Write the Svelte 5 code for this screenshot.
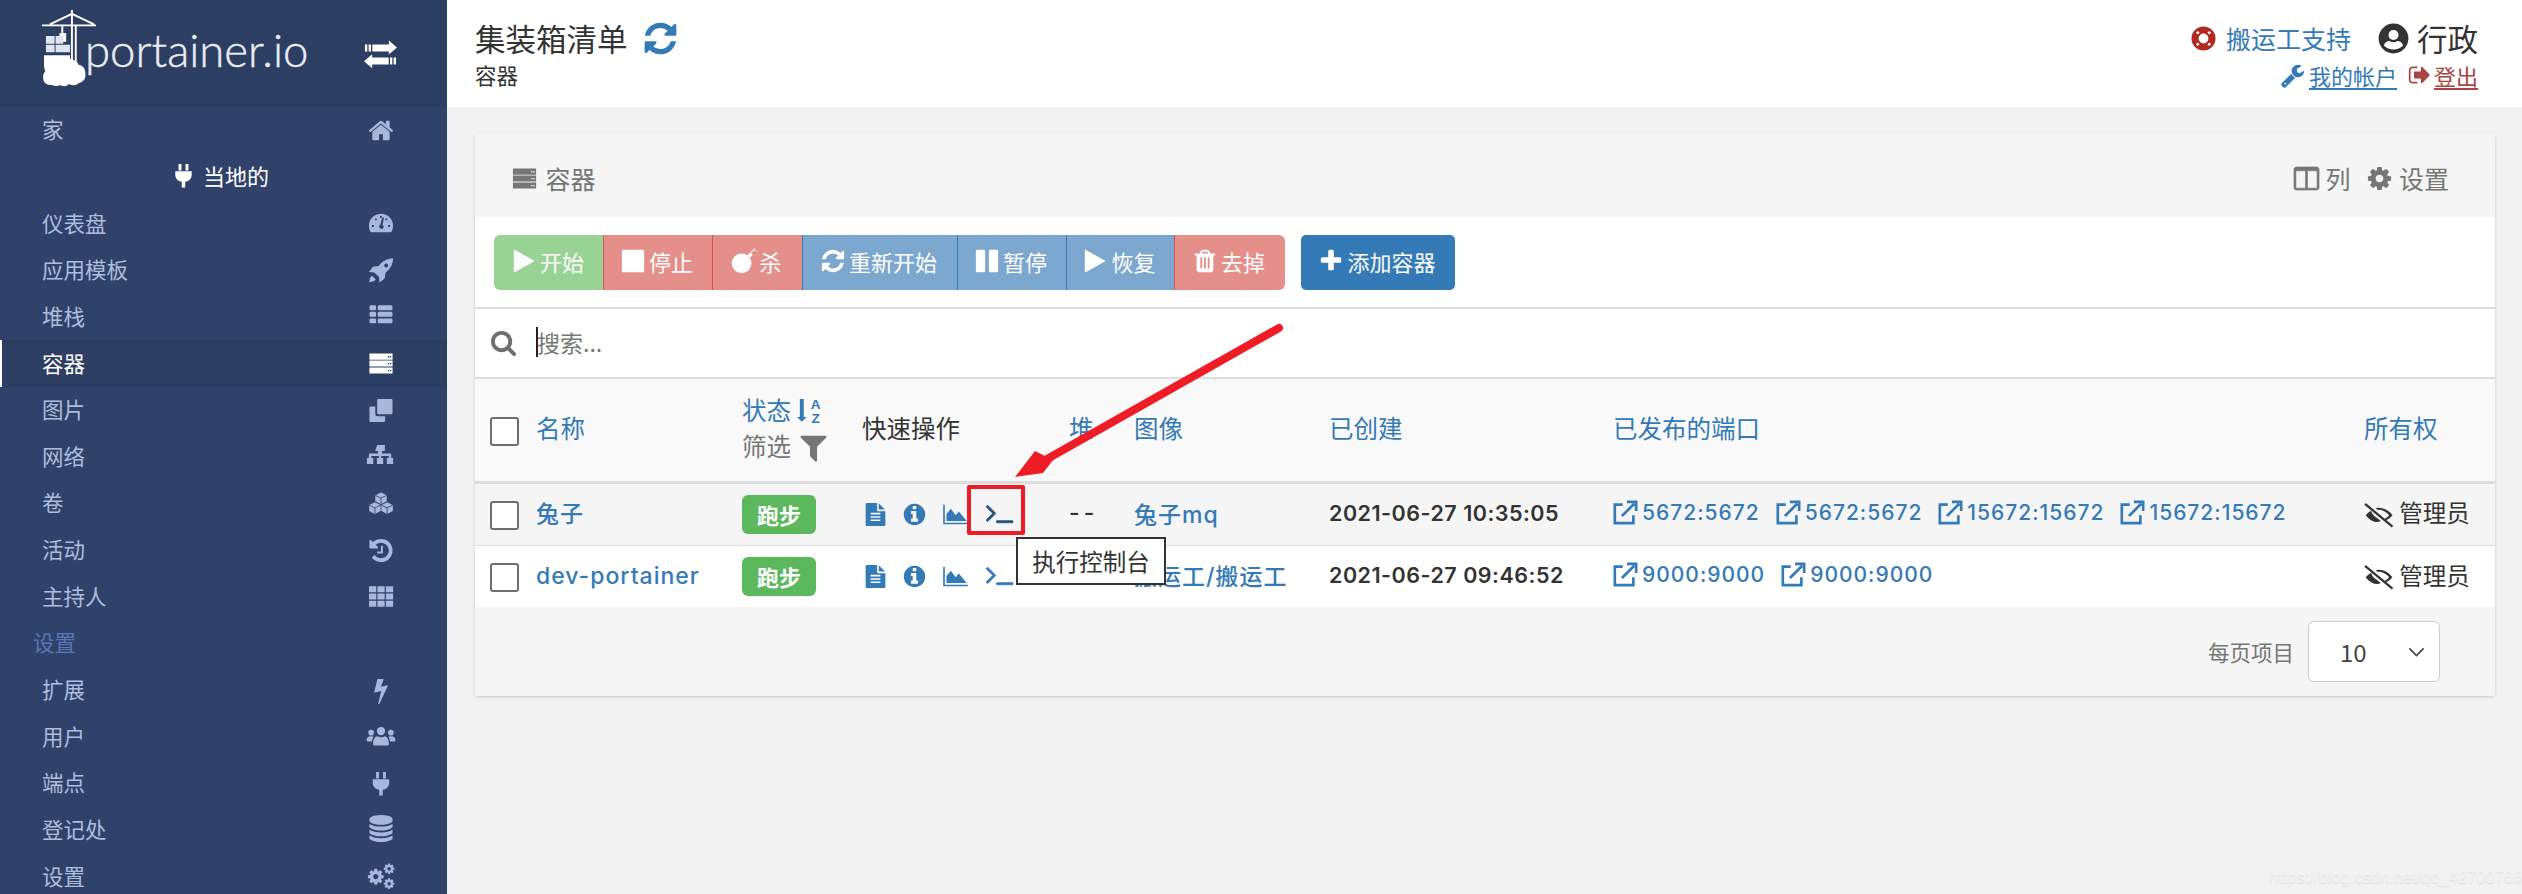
<script>
  const p = (d, extra = '') => `<path d="${d}" ${extra}/>`;
  const cogD = 'M1152 896q0-106-75-181t-181-75-181 75-75 181 75 181 181 75 181-75 75-181zm512-109v222q0 12-8 23t-20 13l-185 28q-19 54-39 91 35 50 107 138 10 12 10 25t-9 23q-27 37-99 108t-94 71q-12 0-26-9l-138-108q-44 23-91 38-16 136-29 186-7 28-36 28h-222q-14 0-24.500-8.500t-11.500-21.500l-28-184q-49-16-90-37l-141 107q-10 9-25 9-14 0-25-11-126-114-165-168-7-10-7-23 0-12 8-23 15-21 51-66.500t54-70.500q-27-50-41-99l-183-27q-13-2-21-12.500t-8-23.500v-222q0-12 8-23t19-13l186-28q14-46 39-92-40-57-107-138-10-12-10-24 0-10 9-23 26-36 98.500-107.500t94.500-71.500q13 0 26 10l138 107q44-23 91-38 16-136 29-186 7-28 36-28h222q14 0 24.500 8.500t11.500 21.500l28 184q49 16 90 37l142-107q9-9 24-9 13 0 25 10 129 119 165 170 7 8 7 22 0 12-8 23-15 21-51 66.500t-54 70.500q26 50 41 98l183 28q13 2 21 12.500t8 23.500z';
  const hex = (x, y) => `<path d="M${x} ${y - 400}l380 190v400l-380 190-380-190v-400z"/><path d="M${x - 380} ${y - 210}l380 190 380-190M${x} ${y - 20}v400" fill="none" stroke="#30426a" stroke-width="55"/>`;

  const icons = {
    home: p('M1472 992v480q0 26-19 45t-45 19h-384v-384h-256v384h-384q-26 0-45-19t-19-45v-480q0-1 .5-3t.5-3l575-474 575 474q1 2 1 6zm223-69l-62 74q-8 9-21 11h-3q-13 0-21-7l-692-577-692 577q-12 8-24 7-13-2-21-11l-62-74q-8-10-7-23.500t11-21.500l719-599q32-26 76-26t76 26l244 204v-195q0-14 9-23t23-9h192q14 0 23 9t9 23v408l219 182q10 8 11 21.500t-7 23.500z'),
    refresh: p('M1639 1056q0 5-1 7-64 268-268 434.500t-478 166.500q-146 0-282.500-55t-243.500-157l-129 129q-19 19-45 19t-45-19-19-45v-448q0-26 19-45t45-19h448q26 0 45 19t19 45-19 45l-137 137q71 66 161 102t187 36q134 0 250-65t186-179q11-17 53-117 8-23 30-23h192q13 0 22.500 9.500t9.500 22.500zm25-800v448q0 26-19 45t-45 19h-448q-26 0-45-19t-19-45 19-45l138-138q-148-137-349-137-134 0-250 65t-186 179q-11 17-53 117-8 23-30 23h-199q-13 0-22.500-9.500t-9.500-22.500v-7q65-268 270-434.500t480-166.500q146 0 284 55.500t245 156.500l130-129q19-19 45-19t45 19 19 45z'),
    play: p('M1576 927l-1328 738q-23 13-39.500 3t-16.500-36v-1472q0-26 16.500-36t39.500 3l1328 738q23 13 23 31t-23 31z'),
    stop: p('M1664 192v1408q0 26-19 45t-45 19h-1408q-26 0-45-19t-19-45v-1408q0-26 19-45t45-19h1408q26 0 45 19t19 45z'),
    pause: p('M1664 192v1408q0 26-19 45t-45 19h-512q-26 0-45-19t-19-45v-1408q0-26 19-45t45-19h512q26 0 45 19t19 45zm-896 0v1408q0 26-19 45t-45 19h-512q-26 0-45-19t-19-45v-1408q0-26 19-45t45-19h512q26 0 45 19t19 45z'),
    plus: p('M1600 736v192q0 40-28 68t-68 28h-416v416q0 40-28 68t-68 28h-192q-40 0-68-28t-28-68v-416h-416q-40 0-68-28t-28-68v-192q0-40 28-68t68-28h416v-416q0-40 28-68t68-28h192q40 0 68 28t28 68v416h416q40 0 68 28t28 68z'),
    search: p('M1216 832q0-185-131.500-316.500t-316.500-131.500-316.500 131.500-131.500 316.500 131.500 316.500 316.500 131.500 316.500-131.500 131.500-316.500zm512 832q0 52-38 90t-90 38q-54 0-90-38l-343-342q-179 124-399 124-143 0-273.500-55.500t-225-150-150-225-55.500-273.500 55.500-273.500 150-225 225-150 273.500-55.500 273.500 55.500 225 150 150 225 55.500 273.500q0 220-124 399l343 343q37 37 37 90z'),
    trash: p('M704 1376v-704q0-14-9-23t-23-9h-64q-14 0-23 9t-9 23v704q0 14 9 23t23 9h64q14 0 23-9t9-23zm256 0v-704q0-14-9-23t-23-9h-64q-14 0-23 9t-9 23v704q0 14 9 23t23 9h64q14 0 23-9t9-23zm256 0v-704q0-14-9-23t-23-9h-64q-14 0-23 9t-9 23v704q0 14 9 23t23 9h64q14 0 23-9t9-23zm-544-992h448l-48-117q-7-9-17-11h-317q-10 2-17 11zm928 32v64q0 14-9 23t-23 9h-96v948q0 83-47 143.500t-113 60.500h-832q-66 0-113-58.500t-47-141.500v-952h-96q-14 0-23-9t-9-23v-64q0-14 9-23t23-9h309l70-167q15-37 54-63t79-26h320q40 0 79 26t54 63l70 167h309q14 0 23 9t9 23z'),
    bomb: `<circle cx="800" cy="1060" r="680"/><path d="M1200 500l200-200 170 170-200 200z"/><path d="M1480 300q40-130 170-150" fill="none" stroke="currentColor" stroke-width="80"/><path d="M1700 30v110M1760 200h110" fill="none" stroke="currentColor" stroke-width="60"/>`,
    thlist: p('M512 1248v192q0 40-28 68t-68 28h-320q-40 0-68-28t-28-68v-192q0-40 28-68t68-28h320q40 0 68 28t28 68zm0-512v192q0 40-28 68t-68 28h-320q-40 0-68-28t-28-68v-192q0-40 28-68t68-28h320q40 0 68 28t28 68zm1280 512v192q0 40-28 68t-68 28h-960q-40 0-68-28t-28-68v-192q0-40 28-68t68-28h960q40 0 68 28t28 68zm-1280-1024v192q0 40-28 68t-68 28h-320q-40 0-68-28t-28-68v-192q0-40 28-68t68-28h320q40 0 68 28t28 68zm1280 512v192q0 40-28 68t-68 28h-960q-40 0-68-28t-28-68v-192q0-40 28-68t68-28h960q40 0 68 28t28 68zm0-512v192q0 40-28 68t-68 28h-960q-40 0-68-28t-28-68v-192q0-40 28-68t68-28h960q40 0 68 28t28 68z', 'transform="translate(0 -90) translate(896 896) scale(.85) translate(-896 -896)"'),
    th: p('M100 240h480v410H100zM660 240h480v410H660zM1220 240h480v410h-480zM100 720h480v410H100zM660 720h480v410H660zM1220 720h480v410h-480zM100 1200h480v410H100zM660 1200h480v410H660zM1220 1200h480v410h-480z', 'transform="translate(0 -30)"'),
    server: p('M128 240h1536v400H128zM1340 400v90h90v-90zM1480 400v90h90v-90zM128 700h1536v400H128zM1340 860v90h90v-90zM1480 860v90h90v-90zM128 1160h1536v400H128zM1340 1320v90h90v-90zM1480 1320v90h90v-90z', 'fill-rule="evenodd"'),
    clone: p('M128 720q0-90 90-90h300v520q0 130 130 130h520v290q0 90-90 90h-860q-90 0-90-90zM640 220q0-90 90-90h840q90 0 90 90v840q0 90-90 90h-840q-90 0-90-90z'),
    sitemap: p('M640 130h512v400h-190v170h540q70 0 70 70v230h130v400h-420v-400h130v-140h-500v140h130v400h-420v-400h130v-140h-500v140h130v400h-420v-400h130v-230q0-70 70-70h540v-170h-190z'),
    cubes: hex(896, 560) + hex(490, 1210) + hex(1302, 1210),
    history: p('M1664 896q0 156-61 298t-164 245-245 164-298 61q-172 0-327-72.500t-264-204.500q-7-10-6.500-22.500t8.500-20.500l137-138q10-9 25-9 16 2 23 12 73 95 179 147t225 52q104 0 198.500-40.500t163.500-109.500 109.500-163.500 40.500-198.500-40.500-198.500-109.500-163.500-163.500-109.500-198.500-40.500q-98 0-188 35.500t-160 101.500l137 138q31 30 14 69-17 40-59 40h-448q-26 0-45-19t-19-45v-448q0-42 40-59 39-17 69 14l130 129q107-101 244.500-156.500t284.500-55.500q156 0 298 61t245 164 164 245 61 298zm-640-288v448q0 14-9 23t-23 9h-320q-14 0-23-9t-9-23v-64q0-14 9-23t23-9h224v-352q0-14 9-23t23-9h64q14 0 23 9t9 23z'),
    bolt: p('M1333 566q18 20 7 44l-540 1157q-13 25-42 25-4 0-14-2-17-5-25.500-19t-4.500-30l197-808-406 101q-4 1-12 1-18 0-31-11-18-15-13-39l201-825q4-14 16-23t28-9h328q19 0 32 12.500t13 29.500q0 8-5 18l-171 463 396-98q8-2 12-2 19 0 34 15z'),
    users: `<g transform="translate(896 896) scale(1.1) translate(-896 -920)"><circle cx="896" cy="590" r="250"/><path d="M420 1380c0-300 120-470 260-470 60 40 130 60 216 60s156-20 216-60c140 0 260 170 260 470 0 60-40 90-100 90H520c-60 0-100-30-100-90z"/><circle cx="300" cy="690" r="170"/><circle cx="1492" cy="690" r="170"/><path d="M330 910c50 25 100 25 130 15-60 90-100 190-110 300H110c-50 0-80-30-80-70 0-170 90-260 300-245z"/><path d="M1462 910c-50 25-100 25-130 15 60 90 100 190 110 300h240c50 0 80-30 80-70 0-170-90-260-300-245z"/></g>`,
    plug: p('M570 130h190v430H570zM1030 130h190v430h-190zM350 620h1090v220c0 250-190 440-430 470v380H780v-380c-240-30-430-220-430-470z'),
    database: p('M896 768q237 0 443-43t325-127v170q0 69-103 128t-280 93.500-385 34.500-385-34.500-280-93.500-103-128v-170q119 84 325 127t443 43zm0 768q237 0 443-43t325-127v170q0 69-103 128t-280 93.500-385 34.500-385-34.500-280-93.500-103-128v-170q119 84 325 127t443 43zm0-384q237 0 443-43t325-127v170q0 69-103 128t-280 93.500-385 34.500-385-34.500-280-93.500-103-128v-170q119 84 325 127t443 43zm0-1152q208 0 385 34.500t280 93.500 103 128v128q0 69-103 128t-280 93.500-385 34.500-385-34.500-280-93.500-103-128v-128q0-69 103-128t280-93.500 385-34.500z', 'transform="translate(0 -64)"'),
    cog: p(cogD),
    cogs: `<g transform="translate(-60 300) scale(.68)">${p(cogD)}</g><g transform="translate(1020 -30) scale(.46)">${p(cogD)}</g><g transform="translate(1020 960) scale(.46)">${p(cogD)}</g>`,
    tach: p('M896 256C450 256 96 610 96 1056c0 150 40 280 110 400 12 18 30 28 52 28h1276c22 0 40-10 52-28 70-120 110-250 110-400 0-446-354-800-800-800zM300 1000h120v120H300zM500 560h120v120H500zM830 400h120v120H830zM1190 560h120v120h-120zM1370 1000h120v120h-120zM1090 520l-90 470q90 60 70 150-30 110-170 100-120-20-130-140 0-90 90-130l110-470z', 'fill-rule="evenodd"'),
    rocket: p('M1700 90c-420 20-720 200-960 500l-380 60-260 340 360 40 300 300 40 360 340-260 60-380c300-240 480-540 500-960zM1240 430a130 130 0 1 0 1 0zM300 1240c-90 60-160 170-180 430 260-20 370-90 430-180z', 'fill-rule="evenodd"'),
    exchange: p('M50 356h130v378H50zM250 356h130v378H250zM450 356h900V140l442 378-442 378V734H450zM1740 1060h-130v378h130zM1540 1060h-130v378h130zM1340 1060H442V880L0 1260l442 380v-202h898z'),
    external: `<path d="M700 330H130v1330h1330v-570M640 1150L1520 270M1000 130h660v660" fill="none" stroke="currentColor" stroke-width="190"/>`,
    info: p('M1152 1376v-160q0-14-9-23t-23-9h-96v-512q0-14-9-23t-23-9h-320q-14 0-23 9t-9 23v160q0 14 9 23t23 9h96v320h-96q-14 0-23 9t-9 23v160q0 14 9 23t23 9h448q14 0 23-9t9-23zm-128-896v-160q0-14-9-23t-23-9h-192q-14 0-23 9t-9 23v160q0 14 9 23t23 9h192q14 0 23-9t9-23zm640 416q0 209-103 385.500t-279.500 279.500-385.500 103-385.500-103-279.500-279.500-103-385.500 103-385.500 279.500-279.500 385.500-103 385.500 103 279.500 279.500 103 385.500z'),
    file: p('M1596 476q14 14 28 36h-472v-472q22 14 36 28zm-476 164h544v1056q0 40-28 68t-68 28h-1344q-40 0-68-28t-28-68v-1600q0-40 28-68t68-28h800v544q0 40 28 68t68 28zm160 736v-64q0-14-9-23t-23-9h-704q-14 0-23 9t-9 23v64q0 14 9 23t23 9h704q14 0 23-9t9-23zm0-256v-64q0-14-9-23t-23-9h-704q-14 0-23 9t-9 23v64q0 14 9 23t23 9h704q14 0 23-9t9-23zm0-256v-64q0-14-9-23t-23-9h-704q-14 0-23 9t-9 23v64q0 14 9 23t23 9h704q14 0 23-9t9-23z'),
    area: p('M1920 1536v128H0V128h128v1408zM256 1400V860l340-420 380 520 240-300 620 740z', 'transform="translate(-64 0)"'),
    terminal: p('M649 983l-466 466q-10 10-23 10t-23-10l-50-50q-10-10-10-23t10-23l393-393-393-393q-10-10-10-23t10-23l50-50q10-10 23-10t23 10l466 466q10 10 10 23t-10 23zm1079 457v64q0 14-9 23t-23 9h-960q-14 0-23-9t-9-23v-64q0-14 9-23t23-9h960q14 0 23 9t9 23z', 'stroke="currentColor" stroke-width="50" transform="translate(0 -130)"'),
    eyeslash: `<path d="M60 230L1700 1590" fill="none" stroke="currentColor" stroke-width="135"/><path d="M100 910Q230 730 430 640 470 880 800 1090l200 170q-100 60-200 60-400 0-700-410zM700 480q100-20 196-20 484 20 804 450-140 200-370 300l-100-90q190-80 270-210-240-300-600-330l-80 10z"/>`,
    wrench: p('M448 1472q0-26-19-45t-45-19-45 19-19 45 19 45 45 19 45-19 19-45zm644-420l-682 682q-37 37-90 37-52 0-91-37l-106-108q-38-36-38-90 0-53 38-91l681-681q39 98 114.500 173.500t173.500 114.500zm634-435q0 39-23 106-47 134-164.500 217.500t-258.500 83.500q-185 0-316.500-131.500t-131.500-316.500 131.500-316.500 316.500-131.500q58 0 121.500 16.500t107.500 46.500q16 11 16 28t-16 28l-293 169v224l193 107q5-3 79-48.500t135.500-81 70.500-35.500q15 0 23.500 10t8.500 25z'),
    signout: p('M704 1440q0 4 1 20t.5 26.500-3 23.500-10 19.500-20.500 6.500h-320q-119 0-203.500-84.500t-84.500-203.500v-704q0-119 84.500-203.500t203.500-84.500h320q13 0 22.500 9.500t9.500 22.500q0 4 1 20t.5 26.500-3 23.500-10 19.500-20.500 6.500h-320q-66 0-113 47t-47 113v704q0 66 47 113t113 47h312l11.500 1 11.500 3 8 5.500 7 9 2 13.500zm928-544q0 26-19 45l-544 544q-19 19-45 19t-45-19-19-45v-288h-448q-26 0-45-19t-19-45v-384q0-26 19-45t45-19h448v-288q0-26 19-45t45-19 45 19l544 544q19 19 19 45z'),
    columns: p('M224 1536h608v-1152h-640v1120q0 13 9.500 22.500t22.500 9.500zm1376-32v-1120h-640v1152h608q13 0 22.500-9.500t9.500-22.500zm128-1216v1216q0 66-47 113t-113 47h-1344q-66 0-113-47t-47-113v-1216q0-66 47-113t113-47h1344q66 0 113 47t47 113z', 'stroke="currentColor" stroke-width="40"'),
    filter: p('M1595 295q17 41-14 70l-493 493v742q0 42-39 59-13 5-25 5-27 0-45-19l-256-256q-19-19-19-45v-486l-493-493q-31-29-14-70 17-39 59-39h1280q42 0 59 39z'),
    sort: `<path d="M640 1330l-320 320-320-320h190V140h260v1190z"/><text x="1240" y="820" font-size="900" font-weight="700" text-anchor="middle" font-family="Liberation Sans, sans-serif">A</text><text x="1240" y="1700" font-size="900" font-weight="700" text-anchor="middle" font-family="Liberation Sans, sans-serif">Z</text>`,
    lifering: `<circle cx="896" cy="896" r="860"/><circle cx="896" cy="896" r="350" fill="#fff"/><path d="M420 420l130 130M1372 420l-130 130M420 1372l130-130M1372 1372l-130-130" stroke="#fff" stroke-width="190"/>`,
    user: `<circle cx="896" cy="896" r="860"/><circle cx="896" cy="690" r="290" fill="#fff"/><path d="M340 1300c60-220 240-260 330-260 130 90 320 90 450 0 90 0 270 40 330 260-280 300-830 300-1110 0z" fill="#fff"/>`
  };

  const menu1 = [
    ['仪表盘', 'tach'], ['应用模板', 'rocket'], ['堆栈', 'thlist'], ['容器', 'server', true],
    ['图片', 'clone'], ['网络', 'sitemap'], ['卷', 'cubes'], ['活动', 'history'], ['主持人', 'th']
  ];
  const menu2 = [
    ['扩展', 'bolt'], ['用户', 'users'], ['端点', 'plug'], ['登记处', 'database'], ['设置', 'cogs']
  ];
  const actions = [
    { label: '开始', icon: 'play', kind: 'ok', w: 109 },
    { label: '停止', icon: 'stop', kind: 'bad', w: 109 },
    { label: '杀', icon: 'bomb', kind: 'bad', w: 90 },
    { label: '重新开始', icon: 'refresh', kind: 'pri', w: 155 },
    { label: '暂停', icon: 'pause', kind: 'pri', w: 109 },
    { label: '恢复', icon: 'play', kind: 'pri', w: 108 },
    { label: '去掉', icon: 'trash', kind: 'bad', w: 111 }
  ];
  const rows = [
    { name: '兔子', image: '兔子mq', created: '2021-06-27 10:35:05', hover: true,
      ports: ['5672:5672', '5672:5672', '15672:15672', '15672:15672'] },
    { name: 'dev-portainer', image: '搬运工/搬运工', created: '2021-06-27 09:46:52', hover: false,
      ports: ['9000:9000', '9000:9000'] }
  ];
</script>

{#snippet ic(name, cls = '')}
  <svg class="ic {cls}" viewBox="0 0 1792 1792" fill="currentColor" aria-hidden="true">{@html icons[name]}</svg>
{/snippet}

<div class="page">
  <aside class="sidebar">
    <div class="brand">
      <svg class="crane" viewBox="0 0 58 80" aria-hidden="true">
        <g fill="none" stroke="#fff" stroke-width="2">
          <path d="M0 16h56M31 0v60M35 16v46M8 15l23-11 23 11" />
          <path d="M21 16v8" />
        </g>
        <rect x="18" y="24" width="7" height="9" fill="#fff" />
        <path d="M4 27h9v8H4zM14 27h8v8h-8zM4 36h9v8H4zM14 36h8v8h-8zM22 36h7v8h-7z" fill="#dfe4ee" />
        <path d="M2 47h27v12l-8 9H9q-7-3-7-10z" fill="#fff" />
        <path d="M10 78q-9 0-9-8 0-8 8-9 2-8 10-7 4-5 10-3 7 1 9 6 7 1 7 9 1 8-7 10-5 4-10 1-4 4-9 1-4 2-9 0z" fill="#fff" />
      </svg>
      <span class="brand-name">portainer.io</span>
      <span class="swap">{@render ic('exchange')}</span>
    </div>
    <nav>
      <div class="item">家 {@render ic('home', 'side')}</div>
      <div class="endpoint">{@render ic('plug', 'small')} 当地的</div>
      {#each menu1 as [label, icon, active]}
        <div class="item" class:active>{label} {@render ic(icon, 'side')}</div>
      {/each}
      <div class="section">设置</div>
      {#each menu2 as [label, icon]}
        <div class="item">{label} {@render ic(icon, 'side')}</div>
      {/each}
    </nav>
  </aside>

  <main>
    <header class="topbar">
      <div class="crumb">
        <div class="title">集装箱清单 <span class="reload">{@render ic('refresh')}</span></div>
        <div class="sub">容器</div>
      </div>
      <div class="account">
        <div class="acc-top">
          <span class="ring">{@render ic('lifering')}</span>
          <a class="support">搬运工支持</a>
          <span class="avatar">{@render ic('user')}</span>
          <span class="who">行政</span>
        </div>
        <div class="acc-links">
          <span class="wrench">{@render ic('wrench')}</span><a class="my"> 我的帐户 </a>
          <span class="out">{@render ic('signout')}</span><a class="logout"> 登出</a>
        </div>
      </div>
    </header>

    <section class="card">
      <div class="card-head">
        <div class="card-title">{@render ic('server')} 容器</div>
        <div class="card-tools">
          <span>{@render ic('columns')} 列</span>
          <span>{@render ic('cog')} 设置</span>
        </div>
      </div>

      <div class="actions">
        <div class="group">
          {#each actions as a}
            <button class={a.kind} style="width: {a.w}px">{@render ic(a.icon)} {a.label}</button>
          {/each}
        </div>
        <button class="add">{@render ic('plus')} 添加容器</button>
      </div>

      <div class="search">
        {@render ic('search')}
        <span class="caret"></span>
        <span class="placeholder">搜索...</span>
      </div>

      <table>
        <colgroup>
          <col style="width: 259px" /><col style="width: 120px" /><col style="width: 207px" />
          <col style="width: 65px" /><col style="width: 195px" /><col style="width: 284px" />
          <col style="width: 751px" /><col />
        </colgroup>
        <thead>
          <tr>
            <th><span class="check"></span><a>名称</a></th>
            <th class="status-th">
              <div><a>状态</a> <a class="sort">{@render ic('sort')}</a></div>
              <div class="filter">筛选 {@render ic('filter')}</div>
            </th>
            <th class="plain">快速操作</th>
            <th><a>堆</a></th>
            <th><a>图像</a></th>
            <th><a>已创建</a></th>
            <th><a>已发布的端口</a></th>
            <th><a>所有权</a></th>
          </tr>
        </thead>
        <tbody>
          {#each rows as r}
            <tr class:hover={r.hover}>
              <td class="txt"><span class="check"></span><a class="latin">{r.name}</a></td>
              <td><span class="badge">跑步</span></td>
              <td>
                <div class="quick">
                  <a>{@render ic('file', 'q-file')}</a>
                  <a>{@render ic('info', 'q-info')}</a>
                  <a>{@render ic('area', 'q-area')}</a>
                  <a class="term" class:dark={r.hover}>{@render ic('terminal', 'q-term')}</a>
                </div>
              </td>
              <td class="txt latin dashes">--</td>
              <td class="txt"><a class="latin">{r.image}</a></td>
              <td class="txt latin created">{r.created}</td>
              <td class="txt">
                <div class="ports">
                  {#each r.ports as port}
                    <a class="latin port">{@render ic('external')} {port}</a>
                  {/each}
                </div>
              </td>
              <td class="txt owner">{@render ic('eyeslash')} 管理员</td>
            </tr>
          {/each}
        </tbody>
      </table>

      <div class="card-foot">
        <span class="per">每页项目</span>
        <div class="select">
          <span>10</span>
          <svg viewBox="0 0 16 10" width="19" height="12" fill="none" stroke="#444" stroke-width="1.4"><path d="M2 2l6 6 6-6" /></svg>
        </div>
      </div>
    </section>
  </main>

  <!-- annotations drawn on top of the screenshot -->
  <div class="tooltip">执行控制台</div>
  <div class="redbox"></div>
  <svg class="arrow" viewBox="0 0 2522 894" aria-hidden="true">
    <path d="M1279 328L1040 463" stroke="#ee1c25" stroke-width="8" stroke-linecap="round" fill="none" />
    <path d="M1015 477L1035 451 1053 460 1043 473z" fill="#ee1c25" />
  </svg>
  <div class="watermark">https://blog.csdn.net/qq_42700766</div>
</div>

<style>
  :global(body) {
    margin: 0;
    background: #f2f2f2;
  }

  .page {
    position: relative;
    display: flex;
    width: 2522px;
    height: 894px;
    overflow: hidden;
    font-family: "Noto Sans CJK SC", "Liberation Sans", sans-serif;
    color: #333;
  }

  a {
    color: #337ab7;
  }

  .ic {
    width: 1em;
    height: 1em;
    overflow: visible;
    vertical-align: -0.12em;
    flex: none;
  }

  .sidebar {
    width: 447px;
    flex: none;
    background: #30426a;
    color: #b0bcdc;
    font-size: 21.5px;
  }

  .brand {
    height: 107px;
    box-sizing: border-box;
    background: #2d3e63;
    display: flex;
    align-items: flex-start;
    padding: 10px 50px 0 42px;
    color: #fff;
  }

  .crane {
    width: 56px;
    height: 77px;
    flex: none;
  }

  .brand-name {
    font-family: Lato, "Open Sans", sans-serif;
    font-weight: 300;
    font-size: 45.5px;
    line-height: 50px;
    margin: 15px 0 0 -13px;
    color: #e9edf4;
    -webkit-text-stroke: 0.4px #e9edf4;
  }

  .swap {
    margin: 27px 0 0 auto;
    font-size: 33px;
    line-height: 1;
  }

  .item {
    height: 46.65px;
    display: flex;
    align-items: center;
    justify-content: space-between;
    padding: 0 52px 3px 42px;
    box-sizing: border-box;
  }

  .item .side {
    font-size: 27px;
    color: #a9b7da;
    width: 28px;
    height: 27px;
    margin-top: 3px;
  }

  .item.active {
    background: #2d3e63;
    color: #fff;
    border-left: 2px solid #fff;
    padding-left: 40px;
  }

  .item.active .side {
    color: #fff;
  }

  .endpoint {
    height: 46.65px;
    display: flex;
    align-items: center;
    justify-content: center;
    gap: 6px;
    color: #fff;
    padding: 0 8px 3px 0;
    box-sizing: border-box;
    font-size: 22px;
  }

  .endpoint .small {
    font-size: 27px;
  }

  .section {
    height: 46.65px;
    line-height: 44px;
    padding-left: 33px;
    color: #5b76b8;
  }

  main {
    flex: 1;
    min-width: 0;
  }

  .topbar {
    height: 107px;
    background: #fff;
    display: flex;
    justify-content: space-between;
    box-sizing: border-box;
    padding: 0 44px 0 28px;
  }

  .crumb {
    padding-top: 16px;
  }

  .title {
    font-size: 30.5px;
    line-height: 44px;
    display: flex;
    align-items: center;
    gap: 14px;
  }

  .reload {
    color: #337ab7;
    font-size: 37px;
    display: flex;
  }

  .sub {
    font-size: 21.5px;
    line-height: 30px;
  }

  .account {
    padding-top: 17px;
    text-align: right;
  }

  .acc-top {
    display: flex;
    align-items: center;
    justify-content: flex-end;
    height: 42px;
  }

  .ring {
    color: #b02a20;
    font-size: 25px;
    display: flex;
    margin-right: 10px;
  }

  .support {
    font-size: 25px;
    margin-right: 27px;
  }

  .avatar {
    font-size: 31px;
    display: flex;
    margin-right: 8px;
  }

  .who {
    font-size: 30.5px;
  }

  .acc-links {
    font-size: 22px;
    display: flex;
    justify-content: flex-end;
    align-items: center;
    height: 30px;
    margin-top: 1px;
  }

  .my,
  .logout {
    text-decoration: underline;
    white-space: pre;
    text-underline-offset: 3px;
  }

  .wrench {
    color: #337ab7;
    font-size: 25px;
    display: flex;
    margin-right: 4px;
  }

  .out {
    color: #a94442;
    font-size: 24px;
    display: flex;
    margin: 0 2px 0 11px;
  }

  .logout {
    color: #a94442;
  }

  .card {
    margin: 27px 27px 0 28px;
    background: #fff;
    border-radius: 4px;
    box-shadow: 0 1px 3px rgba(0, 0, 0, 0.18);
  }

  .card-head {
    height: 83px;
    background: #f5f5f5;
    display: flex;
    justify-content: space-between;
    align-items: center;
    padding: 5px 46px 0 36px;
    box-sizing: border-box;
    font-size: 25px;
    color: #767676;
  }

  .card-title .ic {
    font-size: 27px;
    margin-right: 2px;
  }

  .card-tools {
    display: flex;
    gap: 16px;
  }

  .card-tools .ic {
    font-size: 27px;
  }

  .actions {
    height: 92px;
    box-sizing: border-box;
    border-bottom: 2px solid #ddd;
    display: flex;
    align-items: flex-start;
    padding: 18px 0 0 19px;
    gap: 16px;
  }

  .group {
    display: flex;
    border-radius: 6px;
    overflow: hidden;
  }

  button {
    height: 55px;
    border: 0;
    padding: 0 3px 3px 0;
    color: #fff;
    font: inherit;
    font-size: 22px;
    white-space: nowrap;
    display: flex;
    align-items: center;
    justify-content: center;
    gap: 3px;
    box-sizing: border-box;
    border-left: 1px solid transparent;
  }

  button .ic {
    font-size: 26px;
  }

  .ok {
    background: #98d395;
  }

  .bad {
    background: #e58f8b;
    border-left-color: #d9534f;
  }

  .pri {
    background: #7ca7ce;
    border-left-color: #337ab7;
  }

  .add {
    width: 154px;
    background: #337ab7;
    border-radius: 5px;
  }

  .search {
    height: 70px;
    box-sizing: border-box;
    display: flex;
    align-items: center;
    padding: 0 0 2px 15px;
    font-size: 23px;
    color: #777;
    border-bottom: 2px solid #ddd;
  }

  .search .ic {
    font-size: 27px;
    color: #6f6f6f;
  }

  .caret {
    width: 2px;
    height: 30px;
    background: #222;
    margin-left: 19px;
  }

  .placeholder {
    margin-left: -1px;
  }

  table {
    width: 100%;
    table-layout: fixed;
    border-collapse: collapse;
  }

  th {
    height: 103px;
    padding: 0 0 4px 8px;
    background: #f9f9f9;
    border-bottom: 3px solid #ddd;
    font-size: 24.5px;
    font-weight: 400;
    text-align: left;
    white-space: nowrap;
    box-sizing: border-box;
  }

  th:first-child,
  td:first-child {
    padding-left: 15px;
  }

  .plain {
    color: #333;
  }

  .status-th {
    line-height: 36px;
  }

  .sort .ic {
    font-size: 27px;
    vertical-align: -0.15em;
  }

  .filter {
    color: #767676;
  }

  .filter .ic {
    font-size: 33px;
    vertical-align: -0.25em;
  }

  .check {
    display: inline-block;
    width: 25px;
    height: 25px;
    border: 2px solid #6e6e6e;
    border-radius: 3px;
    margin-right: 17px;
    vertical-align: middle;
    background: #fff;
  }

  td {
    height: 63px;
    padding: 0 0 0 8px;
    border-bottom: 1px solid #ddd;
    font-size: 23px;
    white-space: nowrap;
    box-sizing: border-box;
  }

  td.txt {
    padding-bottom: 3px;
  }

  tbody tr:last-child td {
    border-bottom: 0;
    height: 62px;
  }

  tr.hover td {
    background: #f5f5f5;
  }

  .latin {
    font-family: Inter, "Noto Sans CJK SC", sans-serif;
    font-weight: 500;
    font-size: 23px;
    letter-spacing: 1px;
  }

  .badge {
    display: inline-block;
    width: 74px;
    height: 39px;
    line-height: 38px;
    text-align: center;
    background: #5cb85c;
    color: #fff;
    border-radius: 6px;
    font-size: 22px;
    font-weight: 700;
  }

  .quick {
    display: flex;
    align-items: center;
    height: 30px;
    padding-left: 2px;
  }

  .quick a {
    display: flex;
  }

  .q-file {
    font-size: 23px;
    margin-right: 15px;
  }

  .q-info {
    font-size: 25px;
    margin-right: 17px;
  }

  .q-area {
    font-size: 23px;
    margin-right: 18px;
  }

  .q-term {
    font-size: 29px;
  }

  .term.dark {
    color: #23527c;
  }

  .dashes {
    letter-spacing: 4px;
  }

  .created {
    color: #333;
    font-size: 21.5px;
    font-weight: 600;
    letter-spacing: 0.5px;
  }

  .ports {
    display: flex;
    gap: 16px;
  }

  .port {
    display: flex;
    align-items: center;
    gap: 4px;
    font-size: 21px;
    letter-spacing: 1px;
  }

  .port .ic {
    font-size: 25px;
  }

  .owner {
    font-size: 23.5px;
  }

  .owner .ic {
    font-size: 30px;
    vertical-align: -0.25em;
  }

  .card-foot {
    height: 89px;
    background: #f5f5f5;
    display: flex;
    align-items: center;
    justify-content: flex-end;
    padding: 0 55px 0 0;
    color: #767676;
    font-size: 21.5px;
    gap: 14px;
  }

  .select {
    width: 132px;
    height: 61px;
    box-sizing: border-box;
    background: #fff;
    border: 1px solid #ccc;
    border-radius: 6px;
    display: flex;
    align-items: center;
    justify-content: space-between;
    padding: 0 13px 0 31px;
    font-size: 24px;
    color: #444;
  }

  .tooltip {
    position: absolute;
    left: 1016px;
    top: 537px;
    width: 150px;
    height: 48px;
    box-sizing: border-box;
    border: 2px solid #333;
    background: #fff;
    font-size: 23.5px;
    line-height: 44px;
    text-align: center;
    color: #333;
  }

  .redbox {
    position: absolute;
    left: 967px;
    top: 485px;
    width: 58px;
    height: 50px;
    box-sizing: border-box;
    border: 4px solid #ee1c25;
    border-radius: 2px;
  }

  .arrow {
    position: absolute;
    inset: 0;
    width: 2522px;
    height: 894px;
    pointer-events: none;
  }

  .watermark {
    position: absolute;
    left: 2269px;
    top: 866px;
    font-family: "Liberation Sans", sans-serif;
    font-size: 16.5px;
    line-height: 22px;
    color: #f2f2f2;
    text-shadow: 0 1px 1px #ddd;
    white-space: nowrap;
  }
</style>
